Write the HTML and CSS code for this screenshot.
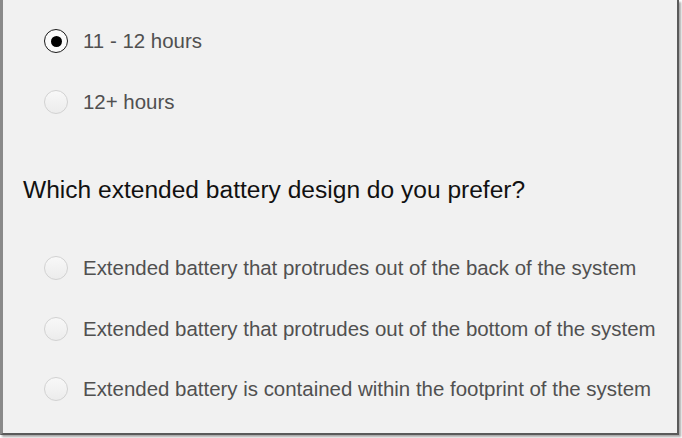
FILE: index.html
```html
<!DOCTYPE html>
<html>
<head>
<meta charset="utf-8">
<link rel="stylesheet" href="styles.css">
</head>
<body>
<div class="frame">
  <div class="opt"><span class="radio checked"></span><span class="label">11 - 12 hours</span></div>
  <div class="opt"><span class="radio"></span><span class="label">12+ hours</span></div>
  <h2 class="question">Which extended battery design do you prefer?</h2>
  <div class="opt"><span class="radio"></span><span class="label">Extended battery that protrudes out of the back of the system</span></div>
  <div class="opt"><span class="radio"></span><span class="label">Extended battery that protrudes out of the bottom of the system</span></div>
  <div class="opt"><span class="radio"></span><span class="label">Extended battery is contained within the footprint of the system</span></div>
</div>
</body>
</html>
```
FILE: styles.css
```css
html, body {
  margin: 0;
  padding: 0;
  background: #ffffff;
}
body {
  width: 682px;
  height: 438px;
  overflow: hidden;
  font-family: "Liberation Sans", Arial, sans-serif;
}
.frame {
  box-sizing: border-box;
  width: 679px;
  height: 435px;
  background: #f1f1f1;
  border-left: 3px solid #8a8a8a;
  border-right: 2px solid #5a5a5a;
  border-bottom: 2px solid #5a5a5a;
  box-shadow: 2px 2px 2px rgba(0,0,0,0.35);
  padding: 11px 0 0 0;
  display: flex;
  flex-direction: column;
}
.opt {
  height: 60.5px;
  display: flex;
  align-items: center;
  padding-left: 41px;
}
.radio {
  box-sizing: border-box;
  width: 24px;
  height: 24px;
  border-radius: 50%;
  border: 1px solid #d2d2d2;
  background: linear-gradient(#f8f8f8, #ececec);
  margin-right: 15px;
  display: flex;
  align-items: center;
  justify-content: center;
  flex: none;
}
.radio.checked {
  border: 1.5px solid #1a1a1a;
  background: #fafafa;
}
.radio.checked::after {
  content: "";
  width: 11px;
  height: 11px;
  border-radius: 50%;
  background: #000;
}
.label {
  font-size: 20.45px;
  color: #505050;
  line-height: 24px;
  white-space: nowrap;
}
.question {
  margin: 42px 0 32px 20px;
  font-size: 24.55px;
  font-weight: normal;
  line-height: 32px;
  color: #111;
}
```
